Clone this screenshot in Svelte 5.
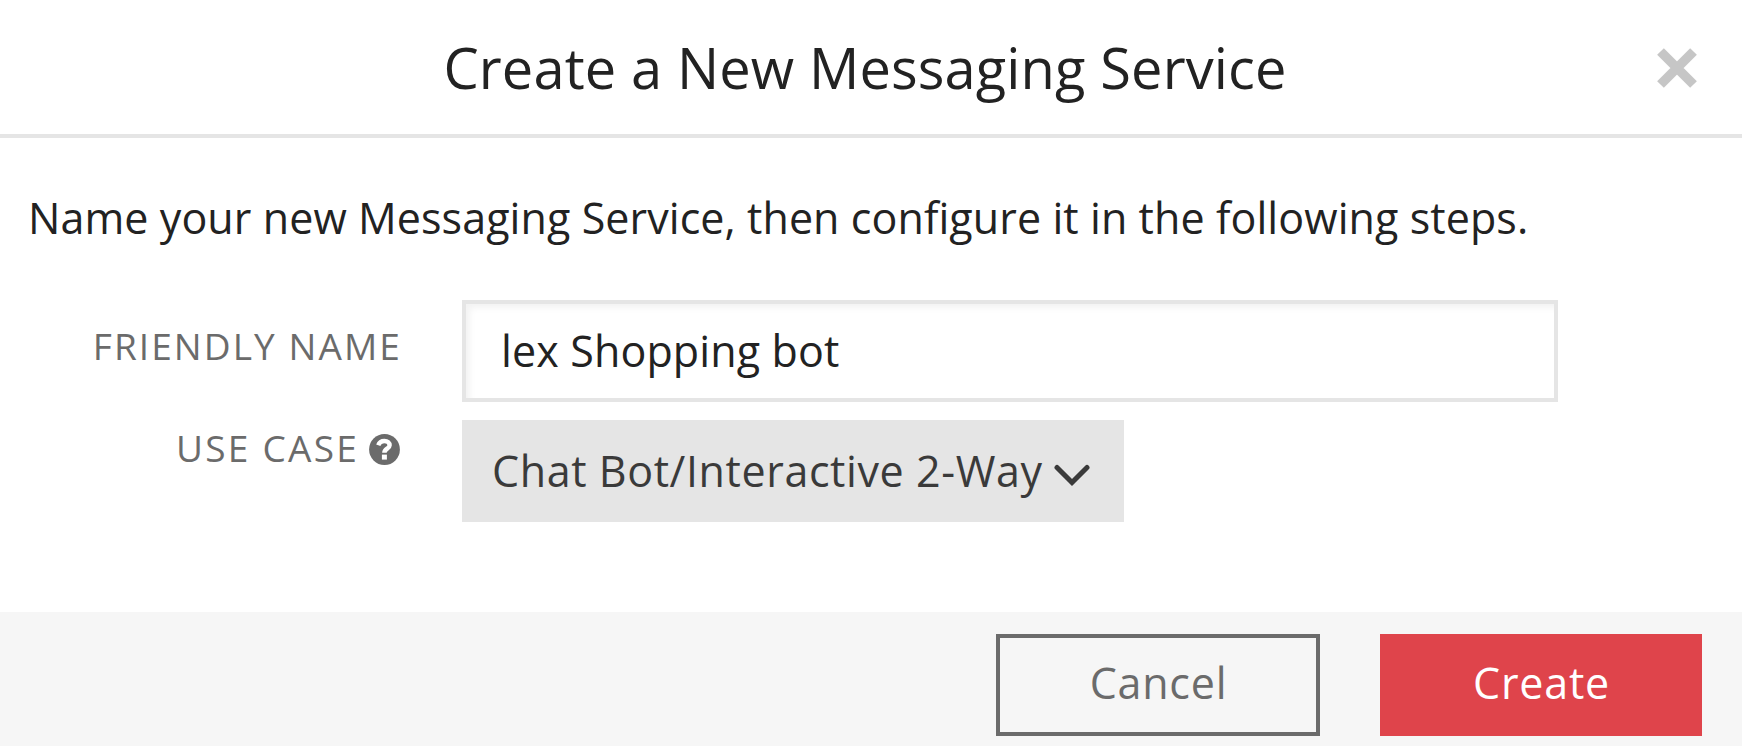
<script>
  let name = $state('lex Shopping bot');
  const useCase = 'Chat Bot/Interactive 2-Way';
</script>

<div class="modal">
  <header>
    <h1>Create a New Messaging Service</h1>
    <button class="close" aria-label="Close">
      <svg width="42" height="42" viewBox="0 0 42 42">
        <path d="M4.500 4.500L37.500 37.500M37.500 4.500L4.500 37.500" stroke="#c6c6c6" stroke-width="9.500" />
      </svg>
    </button>
  </header>

  <main>
    <p>Name your new Messaging Service, then configure it in the following steps.</p>
    <div class="row">
      <label class="label" for="friendly">FRIENDLY NAME</label>
      <input id="friendly" type="text" bind:value={name} spellcheck="false" />
    </div>
    <div class="row second">
      <div class="label use">
        <span>USE CASE</span>
        <svg width="31" height="31" viewBox="0 0 31 31">
          <circle cx="15.500" cy="15.500" r="15.400" fill="#6b6b6b" />
          <path d="M9.300 11.200C10.300 8.300 12.300 6.900 15.400 6.900C18.600 6.900 20.600 8.700 20.600 11.200C20.600 14.800 15.400 14.600 15.400 18.800" fill="none" stroke="#fff" stroke-width="4.500" />
          <rect x="12.900" y="20.600" width="5" height="5" fill="#fff" />
        </svg>
      </div>
      <button class="select">
        <span>{useCase}</span>
        <svg width="36" height="24" viewBox="0 0 36 24">
          <path d="M3 3.500L18 18.500L33 3.500" fill="none" stroke="#3a3a3a" stroke-width="5" stroke-linecap="round" stroke-linejoin="miter" />
        </svg>
      </button>
    </div>
  </main>

  <footer>
    <button class="btn cancel">Cancel</button>
    <button class="btn create">Create</button>
  </footer>
</div>

<style>
  :global(body) { margin: 0; background: #fff; }
  .modal {
    width: 1742px;
    height: 746px;
    display: flex;
    flex-direction: column;
    overflow: hidden;
    background: #fff;
    color: #222;
    font-family: 'Open Sans', 'Noto Sans', sans-serif;
    font-size: 43px;
    font-weight: 400;
  }
  .modal * { box-sizing: border-box; }
  button, input { font: inherit; color: inherit; border: 0; border-radius: 0; margin: 0; }
  header {
    display: grid;
    grid-template-columns: 1fr auto 1fr;
    align-items: center;
    height: 138px;
    border-bottom: 4px solid #e5e5e5;
    padding: 0 44px 0 32px;
  }
  h1 {
    grid-column: 2;
    margin: 0 0 1px;
    font-size: 56px;
    font-weight: inherit;
    line-height: 76px;
    letter-spacing: 0.120px;
    white-space: nowrap;
  }
  .close { justify-self: end; padding: 0; background: none; display: flex; margin-top: 2px; }
  main { height: 474px; padding-top: 50px; flex: none; }
  p { margin: 0 0 52px 28px; line-height: 60px; letter-spacing: 0.080px; white-space: nowrap; }
  .row { display: flex; gap: 60px; height: 102px; }
  .second { margin-top: 18px; }
  .label {
    width: 402px;
    padding-top: 21px;
    line-height: 50px;
    font-size: 37px;
    letter-spacing: 2.080px;
    color: #6b6b6b;
    text-align: right;
  }
  .use { display: flex; justify-content: flex-end; align-items: flex-start; gap: 10px; padding: 3px 2px 0 0; letter-spacing: 2.250px; }
  .use svg { margin-top: 11px; }
  input {
    width: 1096px;
    height: 102px;
    padding: 0 30px 2px 35px;
    border: 4px solid #e5e5e5;
    background: #fff;
    box-shadow: inset 5px 5px 6px -1px #f3f3f3;
    letter-spacing: 0.130px;
    outline: none;
  }
  .select {
    display: flex;
    align-items: center;
    width: 662px;
    padding: 0 30px 2px;
    background: #e5e5e5;
    color: #3a3a3a;
    letter-spacing: 0.600px;
    white-space: nowrap;
  }
  .select svg { margin: 11px 0 0 11px; flex: none; }
  footer {
    flex: 1;
    display: flex;
    justify-content: flex-end;
    align-items: flex-start;
    gap: 60px;
    padding: 22px 40px 0;
    background: #f6f6f6;
  }
  .btn { height: 102px; padding: 0 0 6px 1px; letter-spacing: 0.800px; text-align: center; }
  .cancel { width: 324px; background: transparent; color: #6b6b6b; border: 4px solid #6b6b6b; }
  .create { width: 322px; background: #df444b; color: #fff; }
</style>
